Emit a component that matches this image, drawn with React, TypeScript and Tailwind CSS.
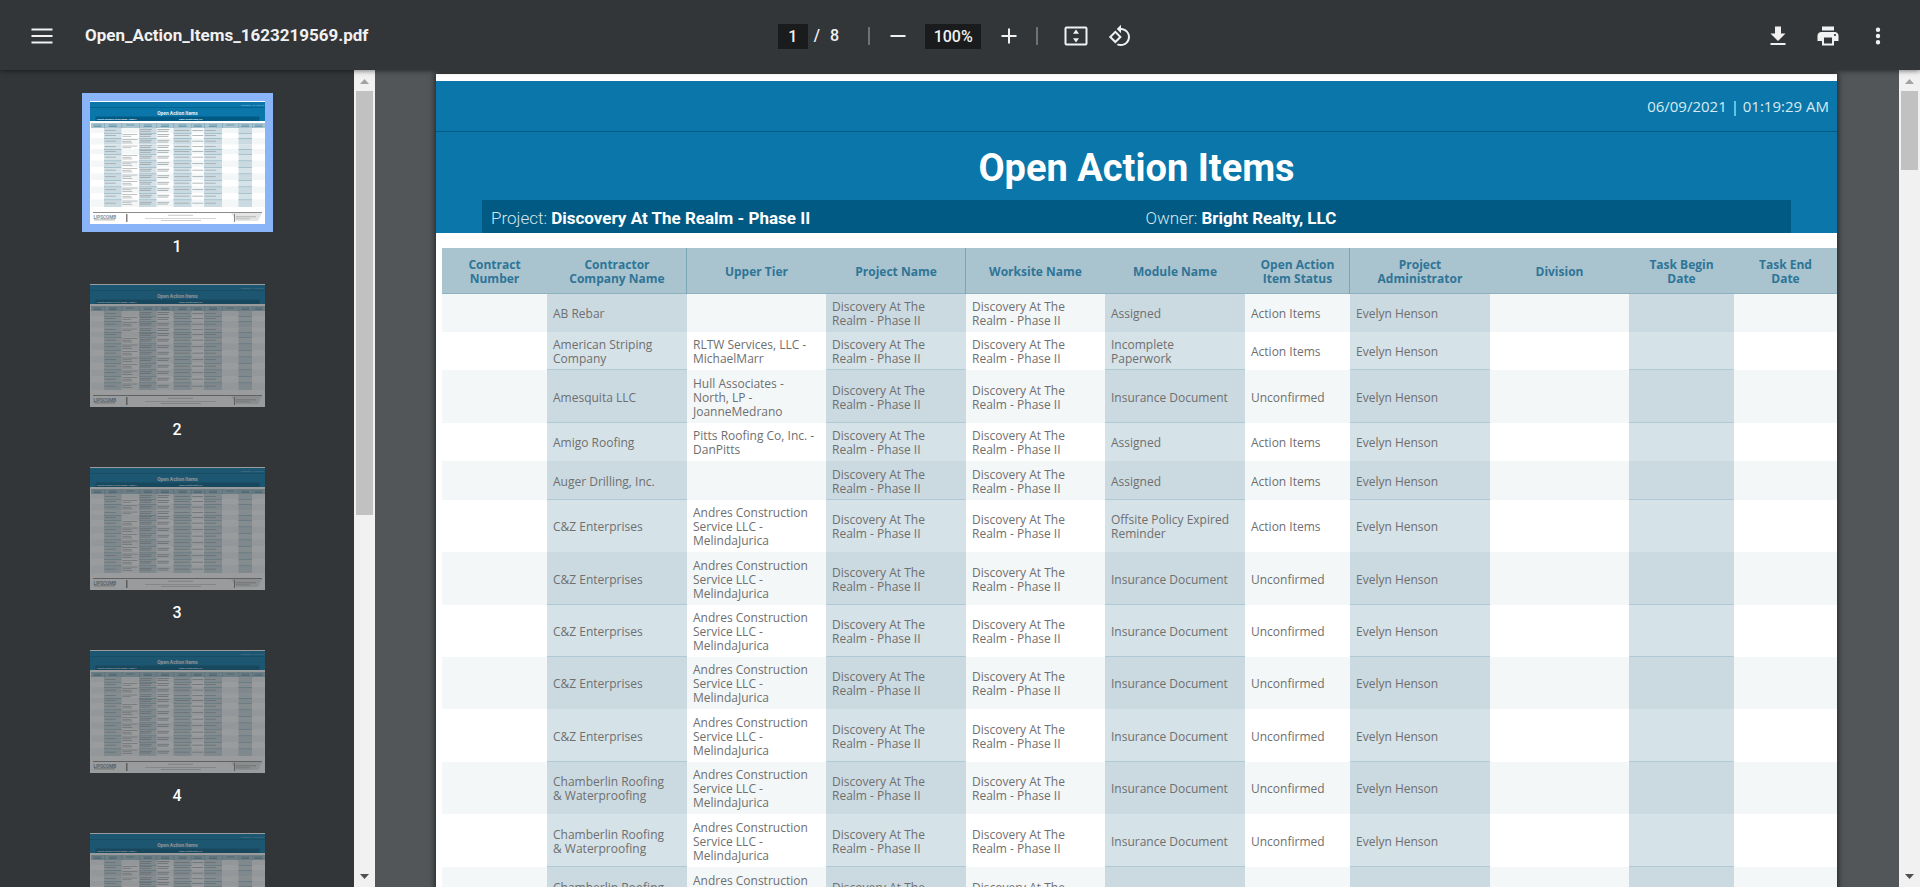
import React from "react";

type Row = {
  company: string;
  tier?: string;
  module: string;
  status: string;
  height: string;
  lined?: boolean;
};

const ANDRES = "Andres Construction Service LLC - MelindaJurica";
const INS = "Insurance Document";

const rows: Row[] = [
  { company: "AB Rebar", module: "Assigned", status: "Action Items", height: "h-[38px]" },
  { company: "American Striping Company", tier: "RLTW Services, LLC - MichaelMarr", module: "Incomplete Paperwork", status: "Action Items", height: "h-[38px]", lined: true },
  { company: "Amesquita LLC", tier: "Hull Associates - North, LP - JoanneMedrano", module: INS, status: "Unconfirmed", height: "h-[53px]", lined: true },
  { company: "Amigo Roofing", tier: "Pitts Roofing Co, Inc. - DanPitts", module: "Assigned", status: "Action Items", height: "h-[38px]" },
  { company: "Auger Drilling, Inc.", module: "Assigned", status: "Action Items", height: "h-[39px]", lined: true },
  { company: "C&Z Enterprises", tier: ANDRES, module: "Offsite Policy Expired Reminder", status: "Action Items", height: "h-[52px]" },
  { company: "C&Z Enterprises", tier: ANDRES, module: INS, status: "Unconfirmed", height: "h-[53px]", lined: true },
  { company: "C&Z Enterprises", tier: ANDRES, module: INS, status: "Unconfirmed", height: "h-[52px]", lined: true },
  { company: "C&Z Enterprises", tier: ANDRES, module: INS, status: "Unconfirmed", height: "h-[52px]" },
  { company: "C&Z Enterprises", tier: ANDRES, module: INS, status: "Unconfirmed", height: "h-[53px]", lined: true },
  { company: "Chamberlin Roofing & Waterproofing", tier: ANDRES, module: INS, status: "Unconfirmed", height: "h-[52px]" },
  { company: "Chamberlin Roofing & Waterproofing", tier: ANDRES, module: INS, status: "Unconfirmed", height: "h-[53px]", lined: true },
  { company: "Chamberlin Roofing & Waterproofing", tier: ANDRES, module: INS, status: "Unconfirmed", height: "h-[53px]" },
];

const columns = [
  { title: "Contract Number", width: "w-[105px]" },
  { title: "Contractor Company Name", width: "w-[140px]", ruled: true },
  { title: "Upper Tier", width: "w-[139px]" },
  { title: "Project Name", width: "w-[140px]", ruled: true },
  { title: "Worksite Name", width: "w-[139px]" },
  { title: "Module Name", width: "w-[140px]" },
  { title: "Open Action Item Status", width: "w-[105px]", ruled: true },
  { title: "Project Administrator", width: "w-[140px]" },
  { title: "Division", width: "w-[139px]" },
  { title: "Task Begin Date", width: "w-[105px]" },
  { title: "Task End Date", width: "w-[103px]" },
];

function Icon({ d, label }: { d: string; label: string }) {
  return (
    <button type="button" aria-label={label} className="flex size-8 items-center justify-center text-[#f1f1f1]">
      <svg viewBox="0 0 24 24" className="size-6" fill="currentColor">
        <path d={d} />
      </svg>
    </button>
  );
}

function Toolbar() {
  return (
    <header className="relative z-10 grid h-[70px] shrink-0 grid-cols-[1fr_auto_1fr] items-center bg-[#323639] px-[26px] pt-0.5 font-[Roboto,sans-serif] text-[#f1f1f1] shadow-[0_1px_5px_rgba(0,0,0,0.5)]">
      <div className="flex items-center gap-[27px]">
        <Icon label="Menu" d="M1.5 4.5h21v2h-21zM1.5 11h21v2h-21zM1.5 17.500h21v2h-21z" />
        <h1 className="text-[17px] font-bold">Open_Action_Items_1623219569.pdf</h1>
      </div>
      <div className="mr-1.5 flex items-center text-base font-medium">
        <input aria-label="Page number" defaultValue="1" className="h-[25px] w-[30px] bg-[#191b1c] text-center" />
        <span className="ml-1.5">/</span>
        <span className="ml-2.5 mr-[29px]">8</span>
        <span className="h-[18px] w-0.5 bg-[#6f7274]" />
        <div className="ml-3 mr-[11px]">
          <Icon label="Zoom out" d="M4.500 11h15v2h-15z" />
        </div>
        <input aria-label="Zoom level" defaultValue="100%" className="h-[25px] w-14 bg-[#191b1c] text-center" />
        <div className="ml-3 mr-[11px]">
          <Icon label="Zoom in" d="M11 4.500h2V11h6.500v2H13v6.500h-2V13H4.500v-2H11z" />
        </div>
        <span className="mr-[22px] h-[18px] w-0.5 bg-[#6f7274]" />
        <Icon
          label="Fit to page"
          d="M2.500 2.500h19a2 2 0 0 1 2 2v15a2 2 0 0 1-2 2h-19a2 2 0 0 1-2-2v-15a2 2 0 0 1 2-2zm0 2v15h19v-15zM12 5.500l3 4.200H9zM12 18.500l3-4.200H9z"
        />
        <div className="ml-3">
          <Icon
            label="Rotate counterclockwise"
            d="M7.340 6.410L.860 12.900l6.490 6.480 6.490-6.480-6.500-6.490zM3.690 12.900l3.660-3.660L11 12.900l-3.660 3.660-3.650-3.660zm15.670-6.260C17.610 4.880 15.300 4 13 4V.760L8.760 5 13 9.240V6c1.790 0 3.580.680 4.950 2.050 2.730 2.730 2.730 7.170 0 9.900C16.580 19.320 14.790 20 13 20c-.970 0-1.940-.210-2.840-.610l-1.490 1.490C10.020 21.620 11.510 22 13 22c2.300 0 4.610-.880 6.360-2.640 3.520-3.510 3.520-9.210 0-12.720z"
          />
        </div>
      </div>
      <div className="flex items-center justify-end gap-[18px]">
        <Icon label="Download" d="M19.500 9.500H15v-7H9v7H4.500L12 17zM4.500 19v2h15v-2z" />
        <Icon
          label="Print"
          d="M18.500 8h-13C3.300 8 1.500 9.600 1.500 11.500V17H6v4.500h12V17h4.500v-5.500C22.500 9.600 20.700 8 18.500 8zM16 19.500H8v-6h8zm3-7.500c-.55 0-1-.45-1-1s.45-1 1-1 1 .45 1 1-.45 1-1 1zM18 2.500H6v4h12z"
        />
        <Icon
          label="More actions"
          d="M12 3.500a2.200 2.200 0 1 0 0 4.400 2.200 2.200 0 0 0 0-4.400zm0 6.300a2.200 2.200 0 1 0 0 4.400 2.200 2.200 0 0 0 0-4.400zm0 6.300a2.200 2.200 0 1 0 0 4.400 2.200 2.200 0 0 0 0-4.400z"
        />
      </div>
    </header>
  );
}

function Scrollbar({ thumb }: { thumb: string }) {
  return (
    <div className="flex w-[21px] shrink-0 flex-col items-center bg-[#f1f1f1]" aria-hidden="true">
      <svg viewBox="0 0 21 21" className="h-[21px] w-[21px] shrink-0">
        <path d="M6 14l4.500-5 4.500 5z" fill="#a3a3a3" />
      </svg>
      <div className={`w-[17px] bg-[#c1c1c1] ${thumb}`} />
      <svg viewBox="0 0 21 21" className="mt-auto h-[21px] w-[21px] shrink-0">
        <path d="M6 8l4.500 5L15 8z" fill="#505050" />
      </svg>
    </div>
  );
}

const thumbCols = [1, 14, 31.500, 49, 66.500, 83.500, 101.500, 114, 132, 148.500, 162, 175];
const thumbRows = [27, 32, 37, 43.500, 48, 53, 59.500, 66, 72.500, 79, 85.500, 92, 98.500, 106];

function ThumbArt() {
  return (
    <svg viewBox="0 0 175 123" className="block w-full" aria-hidden="true">
      <rect width="175" height="123" fill="#fff" />
      <rect y="1" width="175" height="19" fill="#0a76a9" />
      <rect y="6" width="175" height="1" fill="#00648f" />
      <rect x="5.500" y="15.500" width="164" height="4.500" fill="#005a84" />
      <text x="87.500" y="14" textAnchor="middle" fontSize="4.900" fontWeight="700" fill="#e6f1f6" fontFamily="Roboto, sans-serif">Open Action Items</text>
      <text x="174" y="4.600" textAnchor="end" fontSize="1.900" fill="#a9cfe0" fontFamily="Open Sans, sans-serif">06/09/2021 | 01:19:29 AM</text>
      <text x="7" y="18.500" fontSize="2.100" fontWeight="700" fill="#fff" fontFamily="Roboto, sans-serif">Project: Discovery At The Realm - Phase II</text>
      <text x="89" y="18.500" fontSize="2.100" fontWeight="700" fill="#fff" fontFamily="Roboto, sans-serif">Owner: Bright Realty, LLC</text>
      <rect x="1" y="22" width="174" height="5" fill="#a9c3cf" />
      {thumbRows.slice(0, -1).map((y, r) => {
        const h = thumbRows[r + 1] - y;
        return (
          <g key={y}>
            {r % 2 === 0 && <rect x="1" y={y} width="174" height={h} fill="#f3f7f8" />}
            {[1, 3, 5, 7, 9].map((c) => (
              <g key={c}>
                <rect x={thumbCols[c]} y={y} width={thumbCols[c + 1] - thumbCols[c]} height={h} fill={r % 2 === 0 ? "#cbdae1" : "#d5e2e7"} />
                {r !== 0 && r !== 3 && <rect x={thumbCols[c]} y={y} width={thumbCols[c + 1] - thumbCols[c]} height="0.6" fill="#86aebd" />}
              </g>
            ))}
            {[3, 4].map((c) => (
              <g key={c} fill="#9aa3a7">
                <rect x={thumbCols[c] + 0.800} y={y + h / 2 - 1.400} width="12" height="0.8" />
                <rect x={thumbCols[c] + 0.800} y={y + h / 2 + 0.400} width="11" height="0.8" />
              </g>
            ))}
            {[1, 5, 6, 7].map((c) => (
              <rect key={c} x={thumbCols[c] + 0.800} y={y + h / 2 - 0.500} width={c === 5 ? 15 : 11} height="0.8" fill="#9fa9ad" />
            ))}
            {r !== 0 && r !== 4 && (
              <g fill="#a5a9ab">
                <rect x="32.300" y={y + 1.200} width="15" height="0.7" />
                <rect x="32.300" y={y + 2.900} width="9" height="0.7" />
                {h > 6 && <rect x="32.300" y={y + 4.600} width="10" height="0.7" />}
              </g>
            )}
          </g>
        );
      })}
      {thumbCols.slice(0, -1).map((x, i) => (
        <g key={x}>
          <rect x={(x + thumbCols[i + 1]) / 2 - 4} y="23.600" width="8" height="0.8" fill="#5d91a7" />
          {i !== 2 && i !== 8 && <rect x={(x + thumbCols[i + 1]) / 2 - 4} y="25.200" width="8" height="0.8" fill="#5d91a7" />}
          {i > 0 && <rect x={x} y="22" width="0.6" height="5" fill="#7ba4b6" />}
        </g>
      ))}
      <rect x="3" y="111" width="169" height="1" fill="#8c8c8c" />
      <path d="M141 112h31l-4 8h-22z" fill="#e3e4e5" />
      <text x="3.500" y="118" fontSize="4.600" fontWeight="700" fill="#7d8d99" fontFamily="Roboto, sans-serif">LIPSCOMB</text>
      <rect x="4" y="118.500" width="21" height="0.8" fill="#9a9a8a" />
      <rect x="36" y="113" width="1.500" height="8" fill="#848484" />
      <rect x="144" y="113" width="1" height="8" fill="#848484" />
      <rect x="78" y="113.800" width="25" height="0.8" fill="#b9b9b9" />
      <rect x="55" y="117.300" width="71" height="0.7" fill="#c4c4c4" />
      <rect x="71" y="119.200" width="40" height="0.7" fill="#b9b9b9" />
      <rect x="146" y="115.500" width="20" height="0.7" fill="#9a9a9a" />
      <rect x="146" y="117.500" width="14" height="0.7" fill="#aaaaaa" />
    </svg>
  );
}

function Sidebar() {
  return (
    <nav aria-label="Page thumbnails" className="flex w-[354px] shrink-0 flex-col items-center gap-8 overflow-hidden bg-[#323639] pt-[31px] font-[Roboto,sans-serif]">
      {[1, 2, 3, 4, 5].map((n) => (
        <button key={n} type="button" className="flex w-[175px] shrink-0 flex-col items-center gap-[18px] text-base/[10px] font-medium text-white">
          <span className={n === 1 ? "block w-full bg-white outline-8 outline-[#8ab4f8]" : "block w-full opacity-50"}>
            <ThumbArt />
          </span>
          <span>{n}</span>
        </button>
      ))}
    </nav>
  );
}

function ReportTable() {
  return (
    <table className="ml-1.5 mt-[15px] w-[calc(100%-6px)] table-fixed border-collapse font-['Open_Sans','Noto_Sans',sans-serif] text-[12px]/[14px] text-[#6f6f6f]">
      <thead>
        <tr className="h-[46px] bg-[#a9c3cf] text-[#2f7596] shadow-[inset_0_-1px_0_#8fb0bf]">
          {columns.map((c) => (
            <th key={c.title} scope="col" className={`px-2.5 pb-0 pt-0.5 text-center align-middle font-bold ${c.width} ${c.ruled ? "shadow-[inset_-1px_0_0_#7ba4b6]" : ""}`}>
              {c.title}
            </th>
          ))}
        </tr>
      </thead>
      <tbody>
        {rows.map((r, i) => {
          const plain = `pb-0 pt-0.5 pl-1.5 pr-1.5 align-middle ${i % 2 === 0 ? "bg-[#f3f7f8]" : "bg-white"}`;
          const tint = `pb-0 pt-0.5 pl-1.5 pr-3 align-middle ${i % 2 === 0 ? "bg-[#cbdae1]" : "bg-[#d5e2e7]"} ${r.lined ? "shadow-[inset_0_-1px_0_#b0cad5]" : ""}`;
          return (
            <tr key={i} className={r.height}>
              <td className={plain} />
              <td className={tint}>{r.company}</td>
              <td className={plain}>{r.tier}</td>
              <td className={tint}>Discovery At The Realm - Phase II</td>
              <td className={plain}>Discovery At The Realm - Phase II</td>
              <td className={tint}>{r.module}</td>
              <td className={plain}>{r.status}</td>
              <td className={tint}>Evelyn Henson</td>
              <td className={plain} />
              <td className={tint} />
              <td className={plain} />
            </tr>
          );
        })}
      </tbody>
    </table>
  );
}

function Page() {
  return (
    <main className="min-w-0 flex-1 overflow-hidden bg-[#525659] pl-[61px] pr-[62px] pt-1">
      <article className="min-h-full bg-white pt-[7px] shadow-[0_0_6px_1px_rgba(0,0,0,0.6)]">
        <div className="bg-[#0a76a9] text-white">
          <p className="flex h-[51px] items-center justify-end border-b border-[#005a84] pr-2 font-['Open_Sans','Noto_Sans',sans-serif] text-[15px] text-[#d9eaf2]">
            06/09/2021 | 01:19:29 AM
          </p>
          <h2 className="flex h-[68px] items-center justify-center pt-1 font-[Roboto,sans-serif] text-[38px] font-bold">Open Action Items</h2>
          <div className="mx-[46px] grid h-[33px] grid-cols-2 items-center bg-[#005a84] pt-1 font-[Roboto,sans-serif] text-[17px]">
            <p className="pl-[9px] font-light text-[#d9e6ed]">
              Project: <b className="font-bold text-white">Discovery At The Realm - Phase II</b>
            </p>
            <p className="pl-[9px] font-light text-[#d9e6ed]">
              Owner: <b className="font-bold text-white">Bright Realty, LLC</b>
            </p>
          </div>
        </div>
        <ReportTable />
      </article>
    </main>
  );
}

export default function App() {
  return (
    <div className="flex h-screen flex-col overflow-hidden">
      <Toolbar />
      <div className="flex min-h-0 flex-1">
        <Sidebar />
        <Scrollbar thumb="h-[424px]" />
        <Page />
        <Scrollbar thumb="h-[79px]" />
      </div>
    </div>
  );
}
